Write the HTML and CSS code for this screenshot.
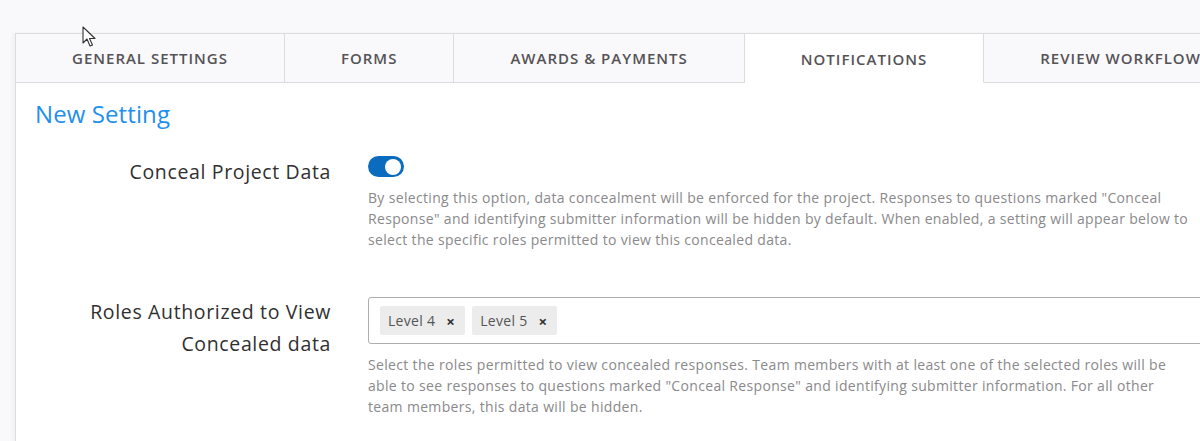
FILE: index.html
```html
<!DOCTYPE html>
<html lang="en">
<head>
<meta charset="utf-8">
<title>Settings</title>
<link rel="stylesheet" href="styles.css">
</head>
<body>
<div class="page">
  <div class="panel">
    <nav class="tabs">
      <div class="tab">General Settings</div>
      <div class="tab">Forms</div>
      <div class="tab">Awards &amp; Payments</div>
      <div class="tab active">Notifications</div>
      <div class="tab">Review Workflow</div>
    </nav>
    <div class="content">
      <h2 class="title">New Setting</h2>
      <div class="form">
        <div class="label">Conceal Project Data</div>
        <div class="control">
          <div class="toggle"><span class="knob"></span></div>
          <p class="help">By selecting this option, data concealment will be enforced for the project. Responses to questions marked "Conceal Response" and identifying submitter information will be hidden by default. When enabled, a setting will appear below to select the specific roles permitted to view this concealed data.</p>
        </div>
        <div class="label">Roles Authorized to View Concealed data</div>
        <div class="control">
          <div class="multiselect">
            <span class="chip">Level 4 <span class="x">×</span></span>
            <span class="chip">Level 5 <span class="x">×</span></span>
          </div>
          <p class="help">Select the roles permitted to view concealed responses. Team members with at least one of the selected roles will be able to see responses to questions marked "Conceal Response" and identifying submitter information. For all other team members, this data will be hidden.</p>
        </div>
      </div>
    </div>
  </div>
  <svg class="cursor" width="16" height="22" viewBox="0 0 16 22"><path d="M1 1 L1 17 L5 13 L8 20 L10.5 19 L7.5 12.5 L13 12.5 Z" fill="#fff" stroke="#333" stroke-width="1.1" stroke-linejoin="round"/></svg>
</div>
</body>
</html>
```

FILE: styles.css
```css
* { box-sizing: border-box; }
html, body { margin: 0; padding: 0; }
body {
  background: #f9f8fa;
  font-family: "Open Sans", "Lato", sans-serif;
  overflow: hidden;
  width: 1200px;
  height: 441px;
}
.page {
  position: relative;
  padding: 33px 0 0 15px;
  width: 1200px;
  height: 441px;
  overflow: hidden;
}
.panel {
  background: #fff;
  border-left: 1px solid #dcdbdd;
  box-shadow: -3px 0 3px rgba(0,0,0,0.03);
  width: 1280px;
  height: 408px;
}
.tabs {
  display: flex;
  height: 50px;
  background: #f9f8fa;
}
.tab {
  padding: 0 56px;
  display: flex;
  align-items: center;
  justify-content: center;
  text-transform: uppercase;
  font-weight: 600;
  font-size: 15px;
  letter-spacing: 1px;
  color: #555356;
  border-top: 1px solid #dcdbdd;
  border-right: 1px solid #dcdbdd;
  border-bottom: 1px solid #dcdbdd;
  white-space: nowrap;
}
.tab.active {
  background: #fff;
  border-bottom-color: #fff;
  padding-top: 2px;
}
.content {
  padding: 16px 0 0 0;
}
.title {
  margin: 0 0 27px 19px;
  font-size: 24px;
  line-height: 30px;
  font-weight: 400;
  letter-spacing: 0.1px;
  color: #1f8fee;
}
.form {
  display: grid;
  grid-template-columns: 315px 860px;
  column-gap: 37px;
  row-gap: 46px;
}
.label {
  text-align: right;
  font-size: 19.5px;
  letter-spacing: 0.65px;
  line-height: 32px;
  color: #303030;
}
.control { min-width: 0; }
.toggle {
  width: 36px;
  height: 21px;
  border-radius: 11px;
  background: #0b6cbf;
  display: flex;
  align-items: center;
  justify-content: flex-end;
  padding-right: 3px;
}
.knob {
  width: 16px;
  height: 16px;
  border-radius: 50%;
  background: #fff;
}
.help {
  margin: 10px 0 0;
  max-width: 824px;
  font-size: 14px;
  letter-spacing: 0.33px;
  line-height: 21px;
  color: #8a898b;
}
.multiselect {
  margin-top: 1px;
  height: 47px;
  border: 1px solid #aeadaf;
  border-radius: 3px;
  padding: 8px 11px;
  display: flex;
  gap: 7px;
}
.chip {
  background: #ececec;
  height: 29px;
  padding: 0 10px 0 8px;
  display: flex;
  align-items: center;
  font-size: 14px;
  letter-spacing: 0.3px;
  color: #555;
  border-radius: 2px;
}
.chip .x {
  margin-left: 11px;
  font-weight: 700;
  font-size: 15px;
  color: #333;
}
.cursor {
  position: absolute;
  left: 82px;
  top: 26px;
}
```
